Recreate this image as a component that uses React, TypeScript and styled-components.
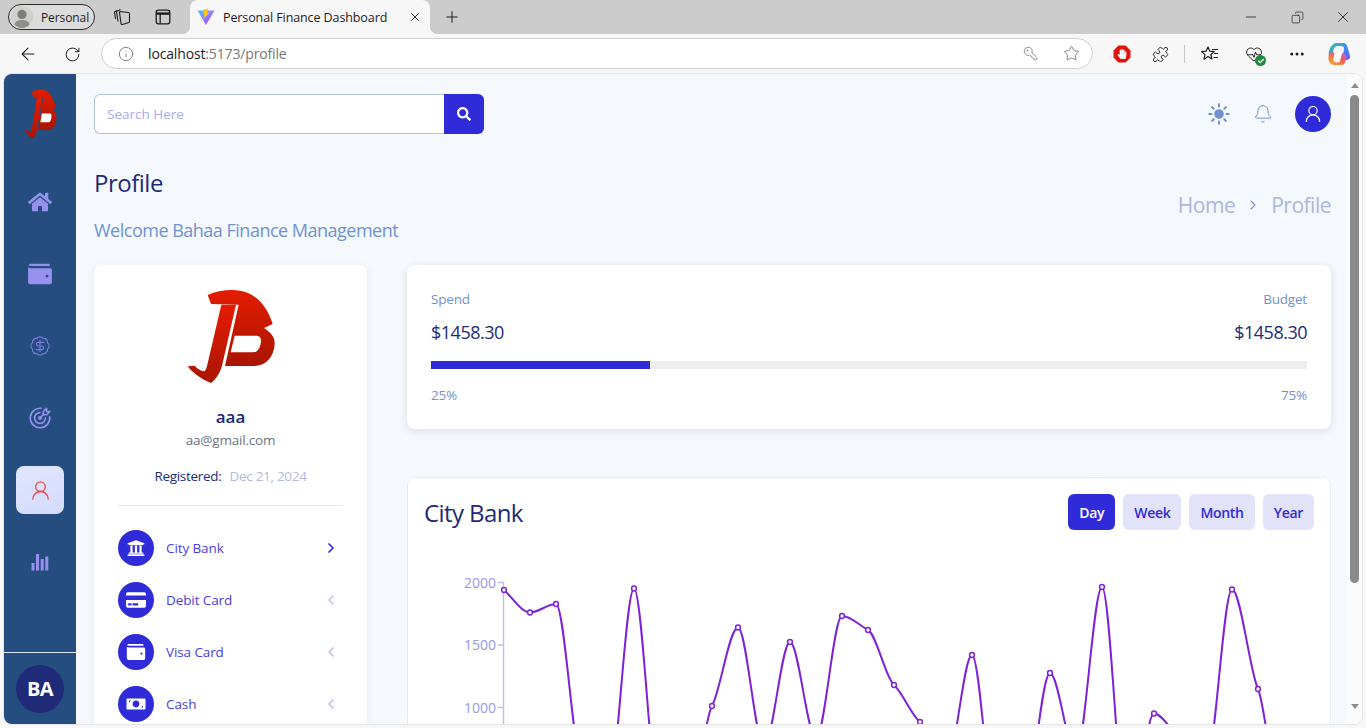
import React from "react";
import styled, { createGlobalStyle } from "styled-components";
import {
  ArrowLeft,
  Bell,
  BadgeDollarSign,
  ChevronLeft,
  ChevronRight,
  Copy,
  Ellipsis,
  HeartPulse,
  Info,
  KeyRound,
  Minus,
  Plus,
  Puzzle,
  RotateCw,
  Star,
  UserRound,
  X,
} from "lucide-react";
import { FaHome, FaHandPaper, FaSearch, FaUniversity, FaCreditCard, FaCheck } from "react-icons/fa";
import { IoSunny } from "react-icons/io5";
import { TbTargetArrow } from "react-icons/tb";

const BLUE = "#2f2bd9";
const NAVY = "#1e2a78";
const SOFT = "#6f93cf";

const GlobalStyle = createGlobalStyle`
  * { box-sizing: border-box; }
  html, body { margin: 0; height: 100%; overflow: hidden; }
  body { font-family: "Open Sans", "Noto Sans", "Liberation Sans", sans-serif; }
`;

const Window = styled.div`
  height: 100vh;
  display: flex;
  flex-direction: column;
  background: #f7f7f7;
  overflow: hidden;
`;
const TabStrip = styled.div`
  height: 34px;
  flex: none;
  background: #cccccc;
  display: flex;
  align-items: center;
  padding-left: 8px;
  color: #1c1c1c;
`;
const ProfilePill = styled.div`
  width: 87px;
  height: 26px;
  margin-bottom: 0;
  border: 1.5px solid #2b2b2b;
  border-radius: 13px;
  background: #dcdcdc;
  display: flex;
  align-items: center;
  gap: 8px;
  padding-left: 2px;
  font-size: 12px;
  letter-spacing: -0.1px;
`;
const StripIcon = styled.div<{ $w: number }>`
  width: ${(p) => p.$w}px;
  flex: none;
  display: flex;
  align-items: center;
  justify-content: center;
`;
const Tab = styled.div`
  position: relative;
  width: 240px;
  height: 34px;
  flex: none;
  background: #f7f7f7;
  border-radius: 8px 8px 0 0;
  display: flex;
  align-items: center;
  padding: 0 8px 0 7px;
  font-size: 12.5px;
  letter-spacing: -0.1px;
  span {
    flex: 1;
    margin-left: 8px;
  }
  &::before,
  &::after {
    content: "";
    position: absolute;
    bottom: 0;
    width: 8px;
    height: 8px;
  }
  &::before {
    left: -8px;
    background: radial-gradient(circle at 0 0, #cccccc 8px, #f7f7f7 8.5px);
  }
  &::after {
    right: -8px;
    background: radial-gradient(circle at 100% 0, #cccccc 8px, #f7f7f7 8.5px);
  }
`;
const WinControls = styled.div`
  margin-left: auto;
  display: flex;
`;
const WinButton = styled.div`
  width: 46px;
  height: 34px;
  display: flex;
  align-items: center;
  justify-content: center;
`;
const ToolBar = styled.div`
  height: 40px;
  flex: none;
  display: flex;
  align-items: center;
  color: #1c1c1c;
`;
const UrlPill = styled.div`
  width: 992px;
  height: 31px;
  margin-bottom: 1px;
  flex: none;
  background: #fff;
  border: 1px solid #cfcfcf;
  border-radius: 16px;
  display: flex;
  align-items: center;
  padding-left: 16px;
  font-size: 14px;
  color: #1c1c1c;
`;
const UrlText = styled.div`
  margin-left: 14px;
  flex: 1;
  letter-spacing: -0.15px;
  em {
    font-style: normal;
    color: #767676;
  }
`;
const PillIcon = styled.div`
  width: 41px;
  display: flex;
  justify-content: center;
  color: #6e6e6e;
`;
const ToolDivider = styled.div`
  width: 1px;
  height: 18px;
  background: #c6c6c6;
  margin: 0 0 0 2px;
`;
const BadgeWrap = styled.div`
  position: relative;
  display: flex;
`;
const CheckBadge = styled.div`
  position: absolute;
  right: -3px;
  bottom: -3px;
  width: 11px;
  height: 11px;
  border-radius: 50%;
  background: #1c8c3c;
  color: #fff;
  display: flex;
  align-items: center;
  justify-content: center;
`;
const Viewport = styled.div`
  flex: 1;
  min-height: 0;
  margin: 0 4px 4px;
  display: flex;
  border-radius: 8px;
  overflow: hidden;
  box-shadow: 0 0 0 1px #e4e4e4;
  background: #f5f8fc;
`;
const Sidebar = styled.aside`
  width: 72px;
  flex: none;
  background: #254d80;
  display: flex;
  flex-direction: column;
  align-items: center;
`;
const SideLogo = styled.div`
  height: 104px;
  padding-top: 15px;
`;
const SideNav = styled.nav`
  display: flex;
  flex-direction: column;
  gap: 24px;
`;
const SideItem = styled.div<{ $active?: boolean }>`
  width: 48px;
  height: 48px;
  border-radius: 8px;
  display: flex;
  align-items: center;
  justify-content: center;
  color: ${(p) => (p.$active ? "#f0484e" : "#9690ee")};
  background: ${(p) => (p.$active ? "linear-gradient(160deg, #e2e6ff, #d3dbfb)" : "transparent")};
`;
const SideFooter = styled.div`
  margin-top: auto;
  width: 100%;
  height: 72px;
  border-top: 1px solid #dfe6f2;
  display: flex;
  align-items: center;
  justify-content: center;
`;
const Initials = styled.div`
  width: 48px;
  height: 48px;
  border-radius: 50%;
  background: #1f2a78;
  color: #fff;
  font-size: 20px;
  font-weight: 700;
  letter-spacing: -0.5px;
  display: flex;
  align-items: center;
  justify-content: center;
`;
const Main = styled.main`
  flex: 1;
  min-width: 0;
  padding: 20px 16px 0 18px;
  overflow: hidden;
`;
const Header = styled.header`
  height: 40px;
  display: flex;
  align-items: center;
  justify-content: space-between;
`;
const SearchBox = styled.form`
  display: flex;
  height: 40px;
`;
const SearchInput = styled.input`
  width: 350px;
  border: 1px solid #b4c3dc;
  border-right: none;
  border-radius: 6px 0 0 6px;
  background: #fff;
  padding: 0 12px;
  font: inherit;
  font-size: 13.5px;
  outline: none;
  &::placeholder {
    color: #a9a9f2;
  }
`;
const SearchButton = styled.button`
  width: 40px;
  border: none;
  border-radius: 0 6px 6px 0;
  background: ${BLUE};
  color: #fff;
  display: flex;
  align-items: center;
  justify-content: center;
  padding: 0;
`;
const HeaderTools = styled.div`
  display: flex;
  align-items: center;
  gap: 20px;
  color: ${SOFT};
`;
const AvatarButton = styled.div`
  width: 36px;
  height: 36px;
  border-radius: 50%;
  background: ${BLUE};
  color: #fff;
  display: flex;
  align-items: center;
  justify-content: center;
`;
const TitleRow = styled.div`
  margin-top: 34px;
  margin-bottom: 23px;
  display: flex;
  align-items: center;
  justify-content: space-between;
`;
const Title = styled.h1`
  margin: 0;
  font-size: 24px;
  line-height: 30px;
  font-weight: 500;
  color: ${NAVY};
  letter-spacing: -0.5px;
`;
const Subtitle = styled.p`
  margin: 20px 0 0;
  font-size: 18px;
  line-height: 24px;
  font-weight: 500;
  color: ${SOFT};
  letter-spacing: -0.5px;
`;
const Breadcrumb = styled.div`
  display: flex;
  align-items: center;
  gap: 10px;
  font-size: 21px;
  font-weight: 500;
  color: #aab7de;
  letter-spacing: -0.5px;
`;
const Columns = styled.div`
  display: grid;
  grid-template-columns: 273px 924px;
  gap: 40px;
  align-items: start;
`;
const ProfileCard = styled.section`
  background: #fff;
  border-radius: 8px;
  padding: 24px;
  box-shadow: 0 2px 8px rgba(60, 80, 130, 0.08);
`;
const ProfileHead = styled.div`
  display: flex;
  flex-direction: column;
  align-items: center;
  padding-bottom: 18px;
  border-bottom: 1px solid #e5e7eb;
`;
const Name = styled.div`
  margin-top: 21px;
  font-size: 17px;
  line-height: 24px;
  font-weight: 600;
  color: ${NAVY};
`;
const Email = styled.div`
  font-size: 13.5px;
  line-height: 22px;
  color: #6b7280;
  letter-spacing: -0.2px;
`;
const Registered = styled.div`
  margin-top: 14px;
  display: flex;
  gap: 8px;
  font-size: 13.5px;
  line-height: 22px;
  font-weight: 500;
  color: ${NAVY};
  letter-spacing: -0.3px;
  span {
    color: #b3b8e0;
  }
`;
const AccountList = styled.ul`
  list-style: none;
  margin: 24px 0 0;
  padding: 0;
  display: flex;
  flex-direction: column;
  gap: 16px;
`;
const AccountRow = styled.li<{ $active?: boolean }>`
  height: 36px;
  display: flex;
  align-items: center;
  gap: 12px;
  padding-right: 4px;
  font-size: 13.5px;
  color: #4a40e0;
  letter-spacing: -0.1px;
  span {
    flex: 1;
  }
  > svg {
    color: ${(p) => (p.$active ? BLUE : "#b4c0de")};
  }
`;
const AccountIcon = styled.div`
  width: 36px;
  height: 36px;
  border-radius: 50%;
  background: ${BLUE};
  color: #fff;
  display: flex;
  align-items: center;
  justify-content: center;
`;
const RightColumn = styled.div`
  display: flex;
  flex-direction: column;
  gap: 48px;
`;
const BudgetCard = styled.section`
  height: 164px;
  background: #fff;
  border-radius: 8px;
  padding: 24px;
  box-shadow: 0 2px 8px rgba(60, 80, 130, 0.14);
`;
const BudgetRow = styled.div<{ $soft?: boolean }>`
  display: flex;
  justify-content: space-between;
  font-size: ${(p) => (p.$soft ? "13.5px" : "18px")};
  line-height: ${(p) => (p.$soft ? "20px" : "24px")};
  font-weight: 500;
  color: ${(p) => (p.$soft ? SOFT : NAVY)};
  letter-spacing: ${(p) => (p.$soft ? "-0.2px" : "-0.5px")};
  margin-top: ${(p) => (p.$soft ? "0" : "11px")};
`;
const Track = styled.div`
  height: 8px;
  margin: 17px 0 16px;
  background: #eeeef0;
`;
const Fill = styled.div`
  height: 100%;
  background: ${BLUE};
`;
const ChartCard = styled.section`
  background: #fff;
  border: 1px solid #e8ecf3;
  border-radius: 8px;
  padding: 16px;
`;
const ChartHead = styled.div`
  display: flex;
  align-items: center;
  justify-content: space-between;
`;
const ChartTitle = styled.h2`
  margin: 0;
  font-size: 24px;
  font-weight: 500;
  color: ${NAVY};
  letter-spacing: -0.6px;
`;
const RangeTabs = styled.div`
  display: flex;
  gap: 8px;
`;
const RangeTab = styled.button<{ $active?: boolean }>`
  height: 36px;
  padding: 0 11px;
  border: none;
  border-radius: 6px;
  font: inherit;
  font-size: 14px;
  font-weight: 600;
  letter-spacing: -0.3px;
  background: ${(p) => (p.$active ? BLUE : "#e2e2f8")};
  color: ${(p) => (p.$active ? "#fff" : BLUE)};
`;
const ChartSvg = styled.svg`
  display: block;
  margin-top: 16px;
`;
const Scrollbar = styled.div`
  width: 15px;
  flex: none;
  background: #fbfbfb;
  display: flex;
  flex-direction: column;
  align-items: center;
  padding-top: 9px;
`;
const ScrollThumb = styled.div`
  width: 9px;
  height: 488px;
  margin-top: 7px;
  border-radius: 5px;
  background: #8a8a8a;
`;
const ScrollArrow = styled.div<{ $down?: boolean }>`
  width: 0;
  height: 0;
  border-left: 4.5px solid transparent;
  border-right: 4.5px solid transparent;
  ${(p) => (p.$down ? "border-top: 5px solid #8a8a8a; margin-top: 121px;" : "border-bottom: 5px solid #8a8a8a;")}
`;

const Logo = ({ id, width, height }: { id: string; width: number; height: number }) => (
  <svg width={width} height={height} viewBox="270 50 270 285" preserveAspectRatio="none" style={{ display: "block" }}>
    <defs>
      <linearGradient id={id} x1="0" y1="0" x2="0" y2="1">
        <stop offset="0" stopColor="#e41c00" />
        <stop offset="1" stopColor="#a81502" />
      </linearGradient>
    </defs>
    <path
      fill={`url(#${id})`}
      d="M335 68 C362 56 400 50 432 55 C482 63 515 105 530 155 L504 167 C519 178 537 190 536 214 C534 254 510 281 470 281 L387 281 L428 97 L345 95 Z"
    />
    <path
      fill={`url(#${id})`}
      d="M376 97 L420 97 L378 280 C372 303 358 322 345 332 C318 322 292 304 275 282 L296 280 C306 291 316 296 325 297 C330 293 332 285 334 277 Z"
    />
    <path fill="#fff" fillOpacity={0} d="M0 0" />
    <path
      fill="#fff"
      d="M416 190 L482 190 C492 190 496 198 495 208 C493 228 484 240 470 240 L404 240 Z"
    />
    <path fill="#fff" d="M426 146 L466 146 C482 146 496 152 504 167 C496 168 490 168 482 167 L424 167 Z" fillOpacity={0} />
  </svg>
);

const ViteLogo = () => (
  <svg width="18" height="18" viewBox="0 0 18 18">
    <defs>
      <linearGradient id="vitePurple" x1="0" y1="0" x2="1" y2="1">
        <stop offset="0" stopColor="#41d1ff" />
        <stop offset="0.5" stopColor="#8f7bff" />
        <stop offset="1" stopColor="#bd34fe" />
      </linearGradient>
    </defs>
    <path fill="url(#vitePurple)" d="M0.5 2.5 L17.5 2.5 L9 17 Z" />
    <path fill="#ffc517" d="M11.5 0.5 L6 1.8 L7.4 8 L6.6 11 L12.4 4.5 L10.2 4.8 Z" />
  </svg>
);

const PersonAvatar = () => (
  <svg width="22" height="22" viewBox="0 0 22 22">
    <circle cx="11" cy="11" r="11" fill="#d2d0cc" />
    <circle cx="11" cy="8.4" r="4.6" fill="#7d7d7d" />
    <path fill="#8d8d8d" d="M3.4 18.5 C4.5 15 7.5 14 11 14 C14.5 14 17.5 15 18.6 18.5 C16.5 20.8 14 22 11 22 C8 22 5.5 20.8 3.4 18.5 Z" />
  </svg>
);

const WorkspaceIcon = () => (
  <svg width="18" height="18" viewBox="0 0 18 18" fill="none" stroke="#1c1c1c" strokeWidth="1.1">
    <path d="M2.5 11 L1.5 4 L4 2.5" />
    <path d="M5 13.5 L3.5 3.5 L7.5 1.5" />
    <path d="M7 3.5 L15.5 4.5 C16 4.6 16.5 5 16.5 5.6 L16.5 13.5 C16.5 14 16.2 14.4 15.8 14.6 L9.5 16.5 C8.8 16.7 8 16.2 8 15.4 L6.5 4.5 Z" />
  </svg>
);

const VerticalTabsIcon = () => (
  <svg width="16" height="16" viewBox="0 0 16 16" fill="none" stroke="#1c1c1c" strokeWidth="1.3">
    <rect x="1.2" y="1.2" width="13.6" height="13.6" rx="2.2" />
    <path d="M1.2 4.6 H14.8" strokeWidth="2.4" />
    <path d="M5.2 4.6 V14.8" />
  </svg>
);

const AdBlockIcon = () => (
  <BadgeWrap>
    <svg width="18" height="18" viewBox="0 0 18 18">
      <path fill="#e1130f" d="M5.4 0.5 H12.6 L17.5 5.4 V12.6 L12.6 17.5 H5.4 L0.5 12.6 V5.4 Z" />
    </svg>
    <StackedHand>
      <FaHandPaper size={10} />
    </StackedHand>
  </BadgeWrap>
);
const StackedHand = styled.div`
  position: absolute;
  inset: 0;
  color: #fff;
  display: flex;
  align-items: center;
  justify-content: center;
`;

const FavoritesIcon = () => (
  <svg width="20" height="20" viewBox="0 0 20 20" fill="none" stroke="#1c1c1c" strokeWidth="1.2" strokeLinejoin="round">
    <path d="M8 3 L9.8 7.2 L14.2 7.6 L10.9 10.5 L11.9 15 L8 12.6 L4 15.2 L5 10.6 L1.6 7.6 L6.1 7.2 Z" />
    <path d="M12 5.5 H18 M14 9.5 H18 M13.5 13.5 H18" />
  </svg>
);

const CopilotIcon = () => (
  <svg width="24" height="24" viewBox="0 0 24 24">
    <defs>
      <linearGradient id="copA" x1="0" y1="0" x2="1" y2="1">
        <stop offset="0" stopColor="#37c6a0" />
        <stop offset="0.5" stopColor="#3f8ef0" />
        <stop offset="1" stopColor="#6a5cf0" />
      </linearGradient>
      <linearGradient id="copB" x1="0" y1="1" x2="1" y2="0">
        <stop offset="0" stopColor="#f5b62a" />
        <stop offset="0.6" stopColor="#ef5a5a" />
        <stop offset="1" stopColor="#c65ee0" />
      </linearGradient>
    </defs>
    <path fill="url(#copA)" d="M9 1 H16 C19 1 20 3 20.5 5 L23 14 C23.6 17 21 18 19 18 H15 L17 7 C17.3 5 16 4 14 4 L11 4 C8 4 7 6 6.5 8 L5 14 H2 C1 10 3 6 4.5 4 C6 2 7.5 1 9 1 Z" />
    <path fill="url(#copB)" d="M2 12 C1 15 1 19 3 21 C4 22.5 6 23 8 23 H14 C17 23 18 21 18.5 19 L19.5 15 C18 12 16 11 15 11 L13 19 C12.6 20 11.5 20.5 10 20.5 C7 20.5 6 19 6.5 16 L7.5 11 C6 10 3 10 2 12 Z" />
    <path fill="#fff" d="M12.2 8.5 H15.4 L13.6 16.5 H10.4 Z" />
  </svg>
);

const WalletGlyph = ({ size }: { size: number }) => (
  <svg width={size} height={size} viewBox="0 0 24 24" fill="currentColor">
    <path d="M3.5 2.5 H19.5 C20.6 2.5 21 3 21 3.8 V4.6 H4.2 C3 4.6 1.8 4.2 1.4 4 C1.6 3.2 2.4 2.5 3.5 2.5 Z" />
    <path d="M1 6 C1.9 6.4 3 6.6 4 6.6 H21.2 C22.3 6.6 23 7.3 23 8.4 V19.7 C23 20.8 22.3 21.5 21.2 21.5 H3.2 C1.9 21.5 1 20.6 1 19.3 Z M18.5 12.6 A1.3 1.3 0 1 0 18.5 15.2 A1.3 1.3 0 1 0 18.5 12.6 Z" fillRule="evenodd" />
  </svg>
);

const BarsGlyph = () => (
  <svg width="18" height="18" viewBox="0 0 18 18" fill="currentColor">
    <rect x="0.5" y="10" width="3" height="7.5" />
    <rect x="5" y="1" width="3" height="16.5" />
    <rect x="9.7" y="6" width="3" height="11.5" />
    <rect x="14.3" y="3.5" width="3" height="14" />
  </svg>
);

const CashGlyph = () => (
  <svg width="20" height="20" viewBox="0 0 20 20" fill="currentColor">
    <path
      fillRule="evenodd"
      d="M1.5 4.5 H18.5 C19 4.5 19.5 5 19.5 5.5 V14.5 C19.5 15 19 15.5 18.5 15.5 H1.5 C1 15.5 0.5 15 0.5 14.5 V5.5 C0.5 5 1 4.5 1.5 4.5 Z M10 6.6 C7.8 6.6 6.6 8.2 6.6 10 C6.6 11.8 7.8 13.4 10 13.4 C12.2 13.4 13.4 11.8 13.4 10 C13.4 8.2 12.2 6.6 10 6.6 Z M3 6.6 L5 6.6 L3 8.6 Z M15 13.4 L17 13.4 L17 11.4 Z"
    />
  </svg>
);

// recharts draws this one with a monotone line, so do the same here
const monotonePath = (pts: [number, number][]) => {
  const n = pts.length;
  const secant = pts.slice(1).map((p, i) => (p[1] - pts[i][1]) / (p[0] - pts[i][0]));
  const slope = pts.map((_, i) => {
    if (i === 0) return secant[0];
    if (i === n - 1) return secant[n - 2];
    const a = secant[i - 1];
    const b = secant[i];
    if (a * b <= 0) return 0;
    return (Math.sign(a) || 1) * Math.min(Math.abs(a), Math.abs(b), 0.5 * Math.abs((a + b) / 2));
  });
  let d = `M${pts[0][0]} ${pts[0][1]}`;
  for (let i = 0; i < n - 1; i++) {
    const h = (pts[i + 1][0] - pts[i][0]) / 3;
    d += ` C${pts[i][0] + h} ${pts[i][1] + h * slope[i]} ${pts[i + 1][0] - h} ${pts[i + 1][1] - h * slope[i + 1]} ${pts[i + 1][0]} ${pts[i + 1][1]}`;
  }
  return d;
};

const values = [
  1936, 1756, 1824, 520, 335, 1948, 200, 130, 1008, 1636, 685, 1520, 750, 1728, 1616, 1176, 880, 513, 1416, 0, 200,
  1272, 620, 1960, 0, 948, 760, 530, 1940, 1144, 100, 300,
];
const points = values.map((v, i): [number, number] => [504 + i * 26, 581 + (2000 - v) * 0.125]);

const accounts = [
  { label: "City Bank", icon: <FaUniversity size={18} />, active: true },
  { label: "Debit Card", icon: <FaCreditCard size={20} /> },
  { label: "Visa Card", icon: <WalletGlyph size={20} /> },
  { label: "Cash", icon: <CashGlyph /> },
];

export default function App() {
  return (
    <Window>
      <GlobalStyle />
      <TabStrip>
        <ProfilePill>
          <PersonAvatar />
          Personal
        </ProfilePill>
        <StripIcon $w={54}>
          <WorkspaceIcon />
        </StripIcon>
        <StripIcon $w={28}>
          <VerticalTabsIcon />
        </StripIcon>
        <StripIcon $w={13} />
        <Tab>
          <ViteLogo />
          <span>Personal Finance Dashboard</span>
          <X size={14} strokeWidth={1.5} />
        </Tab>
        <StripIcon $w={44}>
          <Plus size={18} strokeWidth={1.3} />
        </StripIcon>
        <WinControls>
          <WinButton>
            <Minus size={16} strokeWidth={1.2} />
          </WinButton>
          <WinButton>
            <Copy size={13} strokeWidth={1.3} style={{ transform: "scaleX(-1)" }} />
          </WinButton>
          <WinButton>
            <X size={18} strokeWidth={1.1} />
          </WinButton>
        </WinControls>
      </TabStrip>
      <ToolBar>
        <StripIcon $w={56}>
          <ArrowLeft size={20} strokeWidth={1.3} />
        </StripIcon>
        <StripIcon $w={32}>
          <RotateCw size={17} strokeWidth={1.4} />
        </StripIcon>
        <StripIcon $w={13} />
        <UrlPill>
          <Info size={16} strokeWidth={1.3} color="#6e6e6e" />
          <UrlText>
            localhost<em>:5173/profile</em>
          </UrlText>
          <PillIcon>
            <KeyRound size={15} strokeWidth={1.2} style={{ transform: "scaleX(-1)" }} />
          </PillIcon>
          <PillIcon>
            <Star size={17} strokeWidth={1.2} />
          </PillIcon>
        </UrlPill>
        <StripIcon $w={15} />
        <StripIcon $w={28}>
          <AdBlockIcon />
        </StripIcon>
        <StripIcon $w={44} style={{ marginLeft: 2 }}>
          <Puzzle size={17} strokeWidth={1.3} />
        </StripIcon>
        <ToolDivider />
        <StripIcon $w={50}>
          <FavoritesIcon />
        </StripIcon>
        <StripIcon $w={38}>
          <BadgeWrap>
            <HeartPulse size={18} strokeWidth={1.2} />
            <CheckBadge>
              <FaCheck size={6} />
            </CheckBadge>
          </BadgeWrap>
        </StripIcon>
        <StripIcon $w={48}>
          <Ellipsis size={18} strokeWidth={2} />
        </StripIcon>
        <StripIcon $w={36}>
          <CopilotIcon />
        </StripIcon>
      </ToolBar>
      <Viewport>
        <Sidebar>
          <SideLogo>
            <Logo id="sideLogo" width={33} height={50} />
          </SideLogo>
          <SideNav>
            <SideItem>
              <FaHome size={24} />
            </SideItem>
            <SideItem>
              <WalletGlyph size={26} />
            </SideItem>
            <SideItem>
              <BadgeDollarSign size={22} strokeWidth={1.2} color="#7f7cdc" />
            </SideItem>
            <SideItem>
              <TbTargetArrow size={26} strokeWidth={1.5} />
            </SideItem>
            <SideItem $active>
              <UserRound size={23} strokeWidth={1.4} />
            </SideItem>
            <SideItem>
              <BarsGlyph />
            </SideItem>
          </SideNav>
          <SideFooter>
            <Initials>BA</Initials>
          </SideFooter>
        </Sidebar>
        <Main>
          <Header>
            <SearchBox>
              <SearchInput placeholder="Search Here" />
              <SearchButton type="button">
                <FaSearch size={14} />
              </SearchButton>
            </SearchBox>
            <HeaderTools>
              <IoSunny size={24} />
              <Bell size={20} strokeWidth={1.2} style={{ margin: "0 2px" }} />
              <AvatarButton>
                <UserRound size={20} strokeWidth={1.4} />
              </AvatarButton>
            </HeaderTools>
          </Header>
          <TitleRow>
            <div>
              <Title>Profile</Title>
              <Subtitle>Welcome Bahaa Finance Management</Subtitle>
            </div>
            <Breadcrumb>
              Home
              <ChevronRight size={16} strokeWidth={1.6} color="#7f93c6" />
              Profile
            </Breadcrumb>
          </TitleRow>
          <Columns>
            <ProfileCard>
              <ProfileHead>
                <Logo id="cardLogo" width={90} height={95} />
                <Name>aaa</Name>
                <Email>aa@gmail.com</Email>
                <Registered>
                  Registered: <span>Dec 21, 2024</span>
                </Registered>
              </ProfileHead>
              <AccountList>
                {accounts.map((a) =>
                  a.active ? (
                    <AccountRow key={a.label} $active>
                      <AccountIcon>{a.icon}</AccountIcon>
                      <span>{a.label}</span>
                      <ChevronRight size={16} strokeWidth={2.6} />
                    </AccountRow>
                  ) : (
                    <AccountRow key={a.label}>
                      <AccountIcon>{a.icon}</AccountIcon>
                      <span>{a.label}</span>
                      <ChevronLeft size={16} strokeWidth={2.2} />
                    </AccountRow>
                  )
                )}
              </AccountList>
            </ProfileCard>
            <RightColumn>
              <BudgetCard>
                <BudgetRow $soft>
                  <span>Spend</span>
                  <span>Budget</span>
                </BudgetRow>
                <BudgetRow>
                  <span>$1458.30</span>
                  <span>$1458.30</span>
                </BudgetRow>
                <Track>
                  <Fill style={{ width: "25%" }} />
                </Track>
                <BudgetRow $soft>
                  <span>25%</span>
                  <span>75%</span>
                </BudgetRow>
              </BudgetCard>
              <ChartCard>
                <ChartHead>
                  <ChartTitle>City Bank</ChartTitle>
                  <RangeTabs>
                    <RangeTab $active>Day</RangeTab>
                    <RangeTab>Week</RangeTab>
                    <RangeTab>Month</RangeTab>
                    <RangeTab>Year</RangeTab>
                  </RangeTabs>
                </ChartHead>
                <ChartSvg width={890} height={340} viewBox="424 545 890 340">
                  <path d="M498 581.5 H503.5 V830 M498 644 H503.5 M498 706.5 H503.5" stroke="#bdbdee" strokeWidth={1.4} fill="none" />
                  {[2000, 1500, 1000, 500].map((t) => (
                    <text key={t} x={496} y={586.5 + (2000 - t) * 0.125} textAnchor="end" fontSize={14} fill="#9a96ea">
                      {t}
                    </text>
                  ))}
                  <path d={monotonePath(points)} fill="none" stroke="#7e22d8" strokeWidth={2} />
                  {points.map(([x, y]) => (
                    <circle key={x} cx={x} cy={y} r={2.4} fill="#fff" stroke="#7e22d8" strokeWidth={1.5} />
                  ))}
                </ChartSvg>
              </ChartCard>
            </RightColumn>
          </Columns>
        </Main>
        <Scrollbar>
          <ScrollArrow />
          <ScrollThumb />
          <ScrollArrow $down />
        </Scrollbar>
      </Viewport>
    </Window>
  );
}
